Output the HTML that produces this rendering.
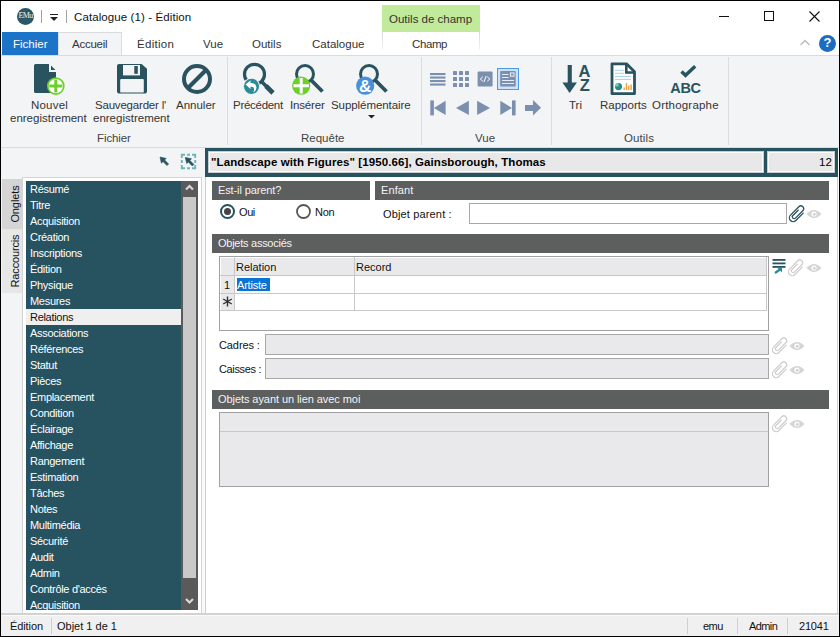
<!DOCTYPE html>
<html><head><meta charset="utf-8">
<style>
*{box-sizing:border-box;margin:0;padding:0}
html,body{width:840px;height:637px;overflow:hidden;background:#000}
body{position:relative;font-family:"Liberation Sans",sans-serif;font-size:11.5px;color:#333}
.a{position:absolute}
.t{position:absolute;white-space:nowrap;line-height:14px;font-size:11.5px}
.c{position:absolute;white-space:nowrap;line-height:14px;font-size:11px;color:#111}
.w{color:#f4f4f4}
</style></head><body>
<!-- TITLE BAR -->
<div class="a" style="left:1px;top:1px;width:838px;height:635px;background:#fff"></div>
<div class="a" style="left:17px;top:8px;width:17px;height:17px;border-radius:50%;background:#2b5866"></div>
<div class="t" style="left:17px;top:9px;width:17px;text-align:center;font-family:'Liberation Serif';font-size:8px;color:#e8eef0;letter-spacing:-0.6px">EMu</div>
<div class="a" style="left:41px;top:10px;width:1px;height:13px;background:#a0a0a0"></div>
<div class="a" style="left:66px;top:10px;width:1px;height:13px;background:#a0a0a0"></div>
<div class="a" style="left:50px;top:14px;width:8px;height:1px;background:#222"></div>
<svg class="a" style="left:50px;top:17px" width="9" height="5"><path d="M0 0h8l-4 4z" fill="#222"/></svg>
<div class="t" style="left:74px;top:10px;color:#111;letter-spacing:0.1px">Catalogue (1) - Édition</div>

<div class="a" style="left:382px;top:5px;width:98px;height:27px;background:#c1ea9a"></div>
<div class="t" style="left:389px;top:12px;color:#333">Outils de champ</div>

<div class="a" style="left:719px;top:16px;width:10px;height:1px;background:#111"></div>
<div class="a" style="left:764px;top:11px;width:10px;height:10px;border:1px solid #111"></div>
<svg class="a" style="left:809px;top:11px" width="12" height="12"><path d="M0.5 0.5L10.5 10.5M10.5 0.5L0.5 10.5" stroke="#111" stroke-width="1.1"/></svg>

<!-- TABS -->
<div class="a" style="left:2px;top:32px;width:56px;height:23px;background:#1c74c9"></div>
<div class="t" style="left:13px;top:37px;color:#fff">Fichier</div>
<div class="a" style="left:58px;top:32px;width:64px;height:24px;background:#f3f4f6;border:1px solid #dadbdc;border-bottom:none"></div>
<div class="t" style="left:72px;top:37px;color:#333;letter-spacing:-0.25px">Accueil</div>
<div class="t" style="left:137px;top:37px;color:#333;letter-spacing:0.3px">Édition</div>
<div class="t" style="left:203px;top:37px;color:#333">Vue</div>
<div class="t" style="left:252px;top:37px;color:#333">Outils</div>
<div class="t" style="left:312px;top:37px;color:#333">Catalogue</div>
<div class="a" style="left:382px;top:32px;width:1px;height:18px;background:linear-gradient(#d8d8d8,#f4f4f4)"></div>
<div class="a" style="left:479px;top:32px;width:1px;height:18px;background:linear-gradient(#d8d8d8,#f4f4f4)"></div>
<div class="t" style="left:412px;top:37px;color:#333;letter-spacing:-0.4px">Champ</div>
<svg class="a" style="left:800px;top:39px" width="11" height="7"><path d="M0.5 6L5 1.5L9.5 6" stroke="#bbb" stroke-width="1.3" fill="none"/></svg>
<div class="a" style="left:819px;top:35px;width:17px;height:17px;border-radius:50%;background:#1b6dc1"></div>
<div class="t" style="left:819px;top:36px;width:17px;text-align:center;font-weight:bold;font-size:13px;color:#fff">?</div>

<!-- RIBBON BODY -->
<div class="a" style="left:1px;top:55px;width:838px;height:93px;background:#f3f4f6;border-top:1px solid #dadbdc;border-bottom:1px solid #dadbdc"></div>
<div class="a" style="left:227px;top:57px;width:1px;height:88px;background:#dcdcdc"></div>
<div class="a" style="left:421px;top:57px;width:1px;height:88px;background:#dcdcdc"></div>
<div class="a" style="left:551px;top:57px;width:1px;height:88px;background:#dcdcdc"></div>
<div class="a" style="left:728px;top:57px;width:1px;height:88px;background:#dcdcdc"></div>
<!-- Fichier group -->
<svg class="a" style="left:34px;top:64px" width="32" height="32">
 <path d="M1.5 0H15V8H22V27.5Q22 29 20.5 29H1.5Q0 29 0 27.5V1.5Q0 0 1.5 0Z" fill="#28535f"/>
 <path d="M17 1.6L21.4 6H17Z" fill="#28535f"/>
 <circle cx="21.8" cy="22.1" r="8" fill="#fff" stroke="#6ccf2a" stroke-width="1.7"/>
 <path d="M15.3 20.6H20.3V15.6H23.3V20.6H28.3V23.6H23.3V28.6H20.3V23.6H15.3Z" fill="#6ccf2a"/>
</svg>
<div class="t" style="left:31px;top:98px;letter-spacing:0.2px">Nouvel</div>
<div class="t" style="left:10px;top:111px">enregistrement</div>

<svg class="a" style="left:117px;top:64px" width="30" height="30">
 <path d="M2 0H24.6L30 4.8V27.6Q30 29.6 28 29.6H2Q0 29.6 0 27.6V2Q0 0 2 0Z" fill="#28535f"/>
 <rect x="6" y="1" width="17" height="10.4" fill="#f3f4f6"/>
 <rect x="17.3" y="2" width="3.5" height="7.8" fill="#28535f"/>
 <rect x="3.2" y="14.9" width="23.6" height="13.7" rx="1.2" fill="#f3f4f6"/>
</svg>
<div class="t" style="left:95px;top:98px;letter-spacing:-0.2px">Sauvegarder l'</div>
<div class="t" style="left:93px;top:111px">enregistrement</div>

<svg class="a" style="left:182px;top:64px" width="30" height="30">
 <circle cx="15" cy="15" r="13" fill="none" stroke="#28535f" stroke-width="4"/>
 <path d="M24 6L6 24" stroke="#28535f" stroke-width="4"/>
</svg>
<div class="t" style="left:176px;top:98px">Annuler</div>
<div class="t" style="left:97px;top:131px;letter-spacing:-0.1px;color:#444">Fichier</div>

<!-- Requete group -->
<svg class="a" style="left:240px;top:60px" width="38" height="38">
 <circle cx="14.5" cy="14.3" r="10" fill="none" stroke="#28535f" stroke-width="3.2"/>
 <path d="M21.5 21.5L32.5 32.5" stroke="#28535f" stroke-width="3.6"/>
 <path d="M26 26L33 33" stroke="#28535f" stroke-width="4.6"/>
 <circle cx="11.5" cy="26.3" r="8.6" fill="#f3f4f6"/>
 <circle cx="11.5" cy="26.3" r="7.6" fill="#2a8c96"/>
 <path d="M5.5 24.5L10.5 20.5V23Q16 22.5 16.5 27.5Q16.5 31 13 32.5Q15 29.5 13.5 27.5Q12.5 26.5 10.5 26.8V29Z" fill="#fff"/>
</svg>
<div class="t" style="left:233px;top:98px;letter-spacing:-0.28px">Précédent</div>

<svg class="a" style="left:290px;top:60px" width="36" height="36">
 <circle cx="15" cy="14" r="8.5" fill="none" stroke="#28535f" stroke-width="3"/>
 <path d="M21 20L32.5 31.5" stroke="#28535f" stroke-width="3.8"/>
 <circle cx="11.2" cy="25.7" r="9.1" fill="#6ccf2a"/>
 <path d="M3.5 24.2H9.7V18H12.7V24.2H18.9V27.2H12.7V33.4H9.7V27.2H3.5Z" fill="#fff"/>
</svg>
<div class="t" style="left:290px;top:98px;letter-spacing:-0.17px">Insérer</div>

<svg class="a" style="left:354px;top:60px" width="36" height="36">
 <circle cx="15" cy="14" r="8.5" fill="none" stroke="#28535f" stroke-width="3"/>
 <path d="M21 20L32.5 31.5" stroke="#28535f" stroke-width="3.8"/>
 <circle cx="11.2" cy="25.7" r="9.1" fill="#4a8fdc"/>
 <text x="11.2" y="32" text-anchor="middle" font-family="Liberation Sans" font-weight="bold" font-size="17" fill="#fff">&amp;</text>
</svg>
<div class="t" style="left:331px;top:98px;letter-spacing:-0.07px">Supplémentaire</div>
<svg class="a" style="left:368px;top:115px" width="7" height="4"><path d="M0 0H7L3.5 3.5Z" fill="#222"/></svg>
<div class="t" style="left:301px;top:131px;color:#444">Requête</div>

<!-- Vue group -->
<svg class="a" style="left:426px;top:64px" width="120" height="56">
 <g fill="#7b8fae">
  <rect x="4" y="9" width="15.5" height="2.1"/>
  <rect x="4" y="12.5" width="15.5" height="2.1"/>
  <rect x="4" y="16" width="15.5" height="2.1"/>
  <rect x="4" y="19.5" width="15.5" height="2.1"/>
  <rect x="27" y="7" width="4" height="4" rx="0.6"/><rect x="33" y="7" width="4" height="4" rx="0.6"/><rect x="39" y="7" width="4" height="4" rx="0.6"/>
  <rect x="27" y="13" width="4" height="4" rx="0.6"/><rect x="33" y="13" width="4" height="4" rx="0.6"/><rect x="39" y="13" width="4" height="4" rx="0.6"/>
  <rect x="27" y="19" width="4" height="4" rx="0.6"/><rect x="33" y="19" width="4" height="4" rx="0.6"/><rect x="39" y="19" width="4" height="4" rx="0.6"/>
  <rect x="51.6" y="7.4" width="15" height="15.2" rx="1"/>
 </g>
 <path d="M56.8 12.8L54.3 15L56.8 17.2M61.3 12.8L63.8 15L61.3 17.2M60.2 12L57.9 18" stroke="#fff" stroke-width="1" fill="none"/>
 <rect x="71.5" y="4.5" width="21" height="21" fill="#cce2f7" stroke="#4d9be6" stroke-width="1"/>
 <rect x="74.2" y="7.1" width="15.5" height="15.5" rx="0.8" fill="#7b8fae"/>
 <g stroke="#e4ebf5" stroke-width="1.1" fill="none">
  <path d="M76 10.5H82.5M76 13.5H82.5M76 16.5H88M76 19.5H88"/>
  <rect x="84.5" y="9" width="3.5" height="3.2"/>
 </g>
 <g fill="#7b8fae">
  <rect x="4.3" y="36.4" width="3.6" height="15"/>
  <path d="M7.9 43.9L19.6 36.8V51Z"/>
  <path d="M30 43.9L42.9 36.8V51Z"/>
  <path d="M64 43.9L51.1 36.8V51Z"/>
  <path d="M86 43.9L74.3 36.8V51Z"/>
  <rect x="86" y="36.4" width="3.6" height="15"/>
  <path d="M99 41H107V36L115 43.7L107 51.4V47H99Z"/>
 </g>
</svg>
<div class="t" style="left:475px;top:131px;color:#444">Vue</div>

<!-- Outils group -->
<svg class="a" style="left:558px;top:60px" width="40" height="40">
 <rect x="9.7" y="5" width="4.1" height="19" fill="#28535f"/>
 <path d="M4.4 22.6H18.9L11.6 33Z" fill="#28535f"/>
 <text x="26.4" y="17" text-anchor="middle" font-family="Liberation Sans" font-weight="bold" font-size="16.5" fill="#28535f">A</text>
 <text x="26.7" y="31.1" text-anchor="middle" font-family="Liberation Sans" font-weight="bold" font-size="16.5" fill="#28535f">Z</text>
</svg>
<div class="t" style="left:569px;top:98px">Tri</div>

<svg class="a" style="left:604px;top:58px" width="40" height="40">
 <path d="M8 5.8H22.5L30.5 13.8V35.7H8Z" fill="#fff" stroke="#28535f" stroke-width="2.8" stroke-linejoin="round"/>
 <path d="M22.3 6V14.5H30.5" fill="none" stroke="#28535f" stroke-width="2.6"/>
 <g stroke="#a9d2ec" stroke-width="1">
  <path d="M11 12.3H20M11 15.3H20M11 18.4H27M11 21.4H27"/>
 </g>
 <circle cx="14.5" cy="28.6" r="3.6" fill="#2a8a8e"/>
 <path d="M14.5 28.6V25A3.6 3.6 0 0 0 10.9 28.6Z" fill="#6fd6b0"/>
 <g fill="#eba13b">
  <rect x="19.5" y="29.5" width="1.4" height="2.6"/>
  <rect x="21.8" y="25" width="1.4" height="7.1"/>
  <rect x="24.1" y="27.5" width="1.4" height="4.6"/>
  <rect x="26.4" y="26.5" width="1.4" height="5.6"/>
 </g>
</svg>
<div class="t" style="left:600px;top:98px">Rapports</div>

<svg class="a" style="left:665px;top:58px" width="40" height="40">
 <path d="M16.5 13.5L20.5 17.3L30.2 8.2" fill="none" stroke="#28535f" stroke-width="3.4"/>
 <text x="20.5" y="34.6" text-anchor="middle" font-family="Liberation Sans" font-weight="bold" font-size="14.5" fill="#28535f" letter-spacing="-0.3">ABC</text>
</svg>
<div class="t" style="left:652px;top:98px;letter-spacing:0.2px">Orthographe</div>
<div class="t" style="left:624px;top:131px;color:#444;letter-spacing:0.1px">Outils</div>
<!-- LEFT PANEL -->
<div class="a" style="left:1px;top:148px;width:204px;height:466px;background:#f3f4f6"></div>
<div class="a" style="left:202px;top:177px;width:3px;height:437px;background:#f9f9f9"></div>
<svg class="a" style="left:158px;top:155px" width="14" height="14">
 <path d="M2 2L8.2 3.4L6.6 5L10.6 9L9 10.6L5 6.6L3.4 8.2Z" fill="#28535f" stroke="#28535f" stroke-width="0.6" stroke-linejoin="round"/>
</svg>
<svg class="a" style="left:180px;top:153px" width="18" height="18">
 <path d="M1.8 5V1.8H5M7 1.8H10M12 1.8H15.2V5M15.2 7V10M15.2 12V15.2H12M10 15.2H7M5 15.2H1.8V12M1.8 10V7" fill="none" stroke="#6cb5b9" stroke-width="1.9"/>
 <path d="M5.3 4.4L11.5 5.8L9.9 7.4L13.9 11.4L12.3 13L8.3 9L6.7 10.6Z" fill="#28535f" stroke="#28535f" stroke-width="0.6" stroke-linejoin="round"/>
</svg>
<!-- vertical tabs -->
<div class="a" style="left:2px;top:179px;width:20px;height:50px;background:#d5d5d5"></div>
<div class="a" style="left:2px;top:229px;width:20px;height:64px;background:#e7e7e7"></div>
<div class="c" style="left:-9px;top:197px;width:48px;height:14px;transform:rotate(-90deg);text-align:center;color:#111;letter-spacing:-0.1px">Onglets</div>
<div class="c" style="left:-13px;top:254px;width:56px;height:14px;transform:rotate(-90deg);text-align:center;color:#111;letter-spacing:-0.15px">Raccourcis</div>
<!-- list frame -->
<div class="a" style="left:22px;top:177px;width:180px;height:437px;background:#fff;border:1px solid #d4d4d4;border-bottom:none"></div>
<div class="a" style="left:26px;top:181px;width:155px;height:429px;background:#27525f;overflow:hidden">
 <div class="a" style="left:0;top:128px;width:155px;height:16px;background:#efefef"></div>
 <div class="a" style="left:4px;top:0;color:#fff;line-height:16px;font-size:11px;white-space:nowrap;letter-spacing:-0.3px">
 Résumé<br>Titre<br>Acquisition<br>Création<br>Inscriptions<br>Édition<br>Physique<br>Mesures<br><span style="color:#111">Relations</span><br>Associations<br>Références<br>Statut<br>Pièces<br>Emplacement<br>Condition<br>Éclairage<br>Affichage<br>Rangement<br>Estimation<br>Tâches<br>Notes<br>Multimédia<br>Sécurité<br>Audit<br>Admin<br>Contrôle d'accès<br>Acquisition
 </div>
</div>
<!-- scrollbar -->
<div class="a" style="left:181px;top:181px;width:17px;height:429px;background:#5a5a5a"></div>
<div class="a" style="left:183px;top:197px;width:13px;height:381px;background:#c9c9c9"></div>
<svg class="a" style="left:184px;top:183px" width="11" height="11"><path d="M2 6.5L5.5 3L9 6.5" fill="none" stroke="#d8d8d8" stroke-width="2.2"/></svg>
<svg class="a" style="left:184px;top:596px" width="11" height="11"><path d="M2 3L5.5 6.5L9 3" fill="none" stroke="#d8d8d8" stroke-width="2.2"/></svg>
<!-- CONTENT PANEL -->
<div class="a" style="left:205px;top:148px;width:634px;height:466px;background:#fff"></div>
<div class="a" style="left:205px;top:177px;width:633px;height:437px;border:1px solid #cdcdcd;border-top:none;border-bottom:none;background:#fff"></div>
<!-- header teal -->
<div class="a" style="left:205px;top:148px;width:633px;height:29px;background:#27525f"></div>
<div class="a" style="left:208px;top:151px;width:556px;height:22px;border:1px solid #c9cccd"></div>
<div class="a" style="left:209px;top:152px;width:554px;height:20px;border:1px solid #fff;background:#e8e8e9"></div>
<div class="a" style="left:767px;top:151px;width:68px;height:22px;border:1px solid #c9cccd"></div>
<div class="a" style="left:768px;top:152px;width:66px;height:20px;border:1px solid #fff;background:#e8e8e9"></div>
<div class="t" style="left:211px;top:155px;font-weight:bold;color:#000;letter-spacing:0.09px">"Landscape with Figures" [1950.66], Gainsborough, Thomas</div>
<div class="t" style="left:819px;top:155px;color:#000">12</div>

<!-- section bars -->
<div class="a" style="left:212px;top:181px;width:158px;height:19px;background:#5d5e5e"></div>
<div class="c w" style="left:218px;top:183px;letter-spacing:-0.12px">Est-il parent?</div>
<div class="a" style="left:375px;top:181px;width:454px;height:19px;background:#5d5e5e"></div>
<div class="c w" style="left:381px;top:183px;letter-spacing:0.1px">Enfant</div>

<!-- radios -->
<svg class="a" style="left:220px;top:204px" width="15" height="15"><circle cx="7.5" cy="7.5" r="6.5" fill="#fff" stroke="#27525f" stroke-width="2"/><circle cx="7.5" cy="7.5" r="3.5" fill="#444"/></svg>
<div class="c" style="left:239px;top:205px;letter-spacing:-0.4px">Oui</div>
<svg class="a" style="left:296px;top:204px" width="15" height="15"><circle cx="7.5" cy="7.5" r="6.5" fill="#fff" stroke="#555" stroke-width="1.8"/></svg>
<div class="c" style="left:315px;top:205px;letter-spacing:-0.3px">Non</div>

<div class="c" style="left:383px;top:207px;letter-spacing:0.15px">Objet parent :</div>
<div class="a" style="left:469px;top:203px;width:318px;height:21px;background:#fff;border:1px solid #a8a8a8"></div>
<svg class="a" style="left:787px;top:204px" width="20" height="20"><g transform="rotate(45 10 10)"><path d="M13.8 5V15.4A3.8 3.8 0 0 1 6.2 15.4V3.6A2.8 2.8 0 0 1 11.8 3.6V14A1.8 1.8 0 0 1 8.2 14V6.5" stroke-linecap="round" fill="none" stroke="#27525f" stroke-width="1.3"/></g></svg>
<svg class="a" style="left:806px;top:208px" width="16" height="12"><path d="M0.5 6Q8 -2 15.5 6Q8 14 0.5 6Z" fill="#d5d5d5"/><circle cx="8" cy="6" r="2.6" fill="#fff"/><circle cx="8.3" cy="6.2" r="1.5" fill="#d5d5d5"/></svg>

<div class="a" style="left:212px;top:234px;width:617px;height:19px;background:#5d5e5e"></div>
<div class="c w" style="left:218px;top:236px;letter-spacing:-0.26px">Objets associés</div>

<!-- grid -->
<div class="a" style="left:219px;top:256px;width:550px;height:75px;border:1px solid #a0a0a0;background:#fff"></div>
<div class="a" style="left:220px;top:257px;width:547px;height:19px;background:#e9e9eb;border-top:1px solid #fff;border-bottom:1px solid #c8c8c8"></div>
<div class="a" style="left:220px;top:257px;width:15px;height:54px;background:#e9e9eb;border-top:1px solid #fff;border-left:1px solid #fff;border-right:1px solid #c8c8c8"></div>
<div class="a" style="left:354px;top:257px;width:1px;height:54px;background:#c8c8c8"></div>
<div class="a" style="left:220px;top:275px;width:15px;height:1px;background:#c8c8c8"></div>
<div class="a" style="left:220px;top:293px;width:547px;height:1px;background:#c8c8c8"></div>
<div class="a" style="left:220px;top:310px;width:547px;height:1px;background:#c8c8c8"></div>
<div class="a" style="left:766px;top:257px;width:1px;height:54px;background:#c8c8c8"></div>
<div class="c" style="left:236px;top:260px">Relation</div>
<div class="c" style="left:356px;top:260px">Record</div>
<div class="c" style="left:224px;top:278px">1</div>
<div class="a" style="left:237px;top:278px;width:33px;height:13px;background:#0a74d6"></div>
<div class="c" style="left:237px;top:278px;color:#fff;letter-spacing:-0.2px">Artiste</div>
<svg class="a" style="left:222px;top:296px" width="11" height="11"><path d="M5.5 0.5V10.5M1.2 3L9.8 8M1.2 8L9.8 3" stroke="#333" stroke-width="1.4"/></svg>

<!-- grid side icons -->
<svg class="a" style="left:771px;top:258px" width="16" height="18">
 <g fill="#27525f"><rect x="1.5" y="1" width="13" height="1.8"/><rect x="1.5" y="4.5" width="13" height="1.8"/><rect x="1.5" y="8" width="13" height="1.8"/></g>
 <path d="M4 15L9 11.5" stroke="#2a8c96" stroke-width="2.2"/><path d="M6.5 10H11V14.5Z" fill="#2a8c96"/>
</svg>
<svg class="a" style="left:786px;top:258px" width="20" height="20"><g transform="rotate(45 10 10)"><path d="M13.8 5V15.4A3.8 3.8 0 0 1 6.2 15.4V3.6A2.8 2.8 0 0 1 11.8 3.6V14A1.8 1.8 0 0 1 8.2 14V6.5" stroke-linecap="round" fill="none" stroke="#cfcfcf" stroke-width="1.3"/></g></svg>
<svg class="a" style="left:806px;top:262px" width="16" height="12"><path d="M0.5 6Q8 -2 15.5 6Q8 14 0.5 6Z" fill="#d5d5d5"/><circle cx="8" cy="6" r="2.6" fill="#fff"/><circle cx="8.3" cy="6.2" r="1.5" fill="#d5d5d5"/></svg>

<!-- cadres / caisses -->
<div class="c" style="left:219px;top:338px;letter-spacing:-0.1px">Cadres :</div>
<div class="a" style="left:265px;top:334px;width:504px;height:21px;background:#e9e9eb;border:1px solid #a8a8a8"></div>
<svg class="a" style="left:770px;top:336px" width="20" height="20"><g transform="rotate(45 10 10)"><path d="M13.8 5V15.4A3.8 3.8 0 0 1 6.2 15.4V3.6A2.8 2.8 0 0 1 11.8 3.6V14A1.8 1.8 0 0 1 8.2 14V6.5" stroke-linecap="round" fill="none" stroke="#cfcfcf" stroke-width="1.3"/></g></svg>
<svg class="a" style="left:789px;top:340px" width="16" height="12"><path d="M0.5 6Q8 -2 15.5 6Q8 14 0.5 6Z" fill="#d5d5d5"/><circle cx="8" cy="6" r="2.6" fill="#fff"/><circle cx="8.3" cy="6.2" r="1.5" fill="#d5d5d5"/></svg>
<div class="c" style="left:219px;top:362px;letter-spacing:-0.35px">Caisses :</div>
<div class="a" style="left:265px;top:358px;width:504px;height:21px;background:#e9e9eb;border:1px solid #a8a8a8"></div>
<svg class="a" style="left:770px;top:360px" width="20" height="20"><g transform="rotate(45 10 10)"><path d="M13.8 5V15.4A3.8 3.8 0 0 1 6.2 15.4V3.6A2.8 2.8 0 0 1 11.8 3.6V14A1.8 1.8 0 0 1 8.2 14V6.5" stroke-linecap="round" fill="none" stroke="#cfcfcf" stroke-width="1.3"/></g></svg>
<svg class="a" style="left:789px;top:364px" width="16" height="12"><path d="M0.5 6Q8 -2 15.5 6Q8 14 0.5 6Z" fill="#d5d5d5"/><circle cx="8" cy="6" r="2.6" fill="#fff"/><circle cx="8.3" cy="6.2" r="1.5" fill="#d5d5d5"/></svg>

<div class="a" style="left:212px;top:390px;width:617px;height:19px;background:#5d5e5e"></div>
<div class="c w" style="left:218px;top:392px;letter-spacing:-0.07px">Objets ayant un lien avec moi</div>

<div class="a" style="left:219px;top:412px;width:550px;height:75px;border:1px solid #a0a0a0;background:#e9e9eb"></div>
<div class="a" style="left:220px;top:431px;width:548px;height:1px;background:#c8c8c8"></div>
<svg class="a" style="left:770px;top:414px" width="20" height="20"><g transform="rotate(45 10 10)"><path d="M13.8 5V15.4A3.8 3.8 0 0 1 6.2 15.4V3.6A2.8 2.8 0 0 1 11.8 3.6V14A1.8 1.8 0 0 1 8.2 14V6.5" stroke-linecap="round" fill="none" stroke="#cfcfcf" stroke-width="1.3"/></g></svg>
<svg class="a" style="left:789px;top:418px" width="16" height="12"><path d="M0.5 6Q8 -2 15.5 6Q8 14 0.5 6Z" fill="#d5d5d5"/><circle cx="8" cy="6" r="2.6" fill="#fff"/><circle cx="8.3" cy="6.2" r="1.5" fill="#d5d5d5"/></svg>

<!-- bottom lines -->
<div class="a" style="left:1px;top:613px;width:838px;height:2px;background:#d2d2d2"></div>
<div class="a" style="left:1px;top:615px;width:838px;height:1px;background:#fafafa"></div>
<!-- STATUS BAR -->
<div class="a" style="left:1px;top:616px;width:838px;height:20px;background:#f0f0f0"></div>
<div class="c" style="left:10px;top:619px;color:#111;letter-spacing:-0.1px">Édition</div>
<div class="a" style="left:51px;top:618px;width:1px;height:16px;background:#d0d0d0"></div>
<div class="c" style="left:57px;top:619px;color:#111">Objet 1 de 1</div>
<div class="a" style="left:687px;top:618px;width:1px;height:16px;background:#d0d0d0"></div>
<div class="a" style="left:737px;top:618px;width:1px;height:16px;background:#d0d0d0"></div>
<div class="a" style="left:787px;top:618px;width:1px;height:16px;background:#d0d0d0"></div>
<div class="c" style="left:703px;top:619px;color:#111;letter-spacing:-0.5px">emu</div>
<div class="c" style="left:749px;top:619px;color:#111;letter-spacing:-0.6px">Admin</div>
<div class="c" style="left:799px;top:619px;color:#111;letter-spacing:-0.2px">21041</div>
</body></html>
